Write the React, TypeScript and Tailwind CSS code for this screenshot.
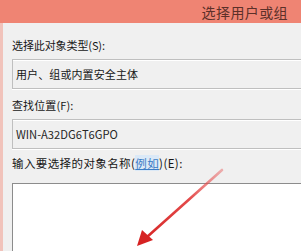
export default function App() {
  const font = { fontFamily: '"Noto Sans CJK SC", "Noto Sans", sans-serif' };
  return (
    <div
      className="relative w-[301px] h-[251px] overflow-hidden bg-[#f0f0f0] text-[#161616]"
      style={font}
    >
      <header className="h-[23px] bg-[#ef8473] flex items-center justify-end pr-[13px]">
        <span className="text-[14px] leading-none text-[#5c3029] tracking-[0.4px]">选择用户或组</span>
      </header>
      <main className="h-[228px] border-l-[3px] border-l-[#f1c3bb] pl-[9px] flex flex-col">
        <label className="mt-[15px] h-[14px] text-[11px] leading-[14px] tracking-[-0.1px]">选择此对象类型(S):</label>
        <div className="mt-[7px] w-[320px] h-[30px] border border-[#bfbfbf] shadow-[0_1px_0_#ffffff,inset_0_1px_0_#ffffff] flex items-center pl-[3px]">
          <span className="text-[11px] tracking-[0.1px]">用户、组或内置安全主体</span>
        </div>
        <label className="mt-[9px] h-[14px] text-[11px] leading-[14px] tracking-[0.1px]">查找位置(F):</label>
        <div className="mt-[7px] w-[320px] h-[30px] border border-[#bfbfbf] shadow-[0_1px_0_#ffffff,inset_0_1px_0_#ffffff] flex items-center pl-[3px]">
          <span className="text-[11.2px] text-[#262626]">WIN-A32DG6T6GPO</span>
        </div>
        <label className="mt-[7px] h-[14px] text-[11.5px] leading-[14px] tracking-[0.4px]">
          输入要选择的对象名称(
          <span className="text-[#3b7cc4] underline bg-[#dbe9f7]">例如</span>
          )(E):
        </label>
        <div className="mt-[13px] w-[320px] flex-1 bg-white border-t border-l border-[#8c8c8c]" />
      </main>
      <svg className="absolute left-0 top-0" width="301" height="251" viewBox="0 0 301 251">
        <defs>
          <linearGradient id="ar" x1="222" y1="170" x2="140" y2="244" gradientUnits="userSpaceOnUse">
            <stop offset="0" stopColor="#e85a5a" stopOpacity="0.45" />
            <stop offset="0.4" stopColor="#e03636" stopOpacity="0.9" />
            <stop offset="1" stopColor="#d62222" />
          </linearGradient>
        </defs>
        <line x1="222" y1="170" x2="147" y2="237" stroke="url(#ar)" strokeWidth="2.6" strokeLinecap="round" />
        <polygon points="137,246 142,230 153,240" fill="#d62222" />
      </svg>
    </div>
  );
}
